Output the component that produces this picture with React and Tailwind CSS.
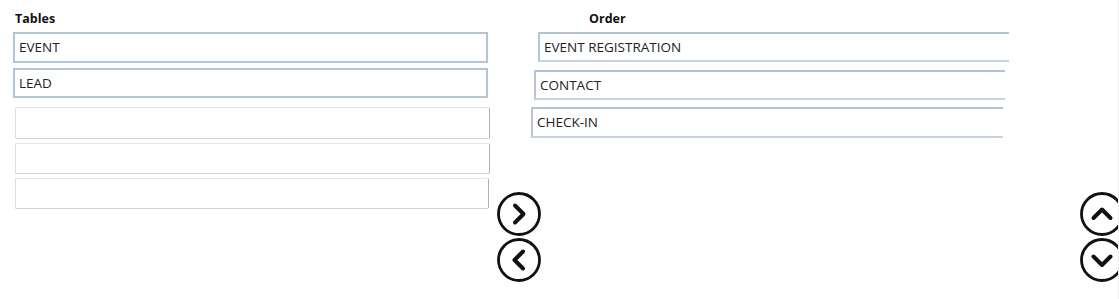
import React from "react"

const font = { fontFamily: '"Open Sans", "Noto Sans", "Liberation Sans", sans-serif' }

function CircleArrow({ dir }) {
  const paths = {
    right: "M18 13.5 L26.5 22 L18 30.5",
    left: "M26 13.5 L17.5 22 L26 30.5",
    up: "M13.5 26 L22 17.5 L30.5 26",
    down: "M13.5 18.5 L22 27 L30.5 18.5",
  }
  return (
    <button className="block h-[44px] w-[44px] p-0">
      <svg viewBox="0 0 44 44" className="h-[44px] w-[44px]" aria-hidden="true">
        <circle cx="22" cy="22" r="20.5" fill="none" stroke="#111" strokeWidth="2.8" />
        <path d={paths[dir]} fill="none" stroke="#111" strokeWidth="4" strokeLinecap="round" strokeLinejoin="round" />
      </svg>
    </button>
  )
}

function FilledBox({ label, className }) {
  return (
    <div
      className={`flex items-center border-2 border-[#b3c4d9] bg-white pl-[4px] text-[13.5px] text-[#222] ${className}`}
    >
      {label}
    </div>
  )
}

function EmptyBox({ className }) {
  return (
    <div
      className={`rounded-r-[2px] border border-t-[#dfe6ee] border-r-[#a9b2bc] border-b-[#c9d4df] border-l-[#d9e0e8] bg-white ${className}`}
    />
  )
}

function OrderBox({ label, className }) {
  return (
    <div
      className={`flex items-center border-t-2 border-b-2 border-l-2 border-t-[#b3c2d6] border-b-[#c7d3e0] border-l-[#b9c6d6] bg-white pl-[4px] text-[13.5px] text-[#222] ${className}`}
    >
      {label}
    </div>
  )
}

export default function App() {
  return (
    <div
      className="relative flex h-[299px] w-[1119px] overflow-hidden border-r border-[#eceef1] bg-white"
      style={font}
    >
      <div className="flex w-[490px] flex-col pt-[10px]">
        <p className="ml-[15px] text-[12.5px] font-bold leading-[17px] text-[#111]">Tables</p>
        <FilledBox label="EVENT" className="ml-[13px] mt-[5px] h-[31px] w-[475px]" />
        <FilledBox label="LEAD" className="ml-[13px] mt-[5px] h-[30px] w-[475px]" />
        <EmptyBox className="ml-[15px] mt-[9px] h-[32px] w-[475px]" />
        <EmptyBox className="ml-[15px] mt-[4px] h-[31px] w-[475px]" />
        <EmptyBox className="ml-[15px] mt-[4px] h-[31px] w-[474px]" />
      </div>

      <div className="flex flex-1 flex-col pt-[10px]">
        <p className="ml-[99px] text-[12.5px] font-bold leading-[17px] text-[#111]">Order</p>
        <OrderBox label="EVENT REGISTRATION" className="ml-[48px] mt-[5px] h-[30px] w-[471px]" />
        <OrderBox label="CONTACT" className="ml-[44px] mt-[8px] h-[30px] w-[471px]" />
        <OrderBox label="CHECK-IN" className="ml-[41px] mt-[7px] h-[31px] w-[472px]" />

        <div className="mt-[54px] flex">
          <div className="ml-[7px] flex flex-col gap-[2px]">
            <CircleArrow dir="right" />
            <CircleArrow dir="left" />
          </div>
          <div className="ml-[539px] flex flex-col gap-[2px]">
            <CircleArrow dir="up" />
            <CircleArrow dir="down" />
          </div>
        </div>
      </div>
    </div>
  )
}
